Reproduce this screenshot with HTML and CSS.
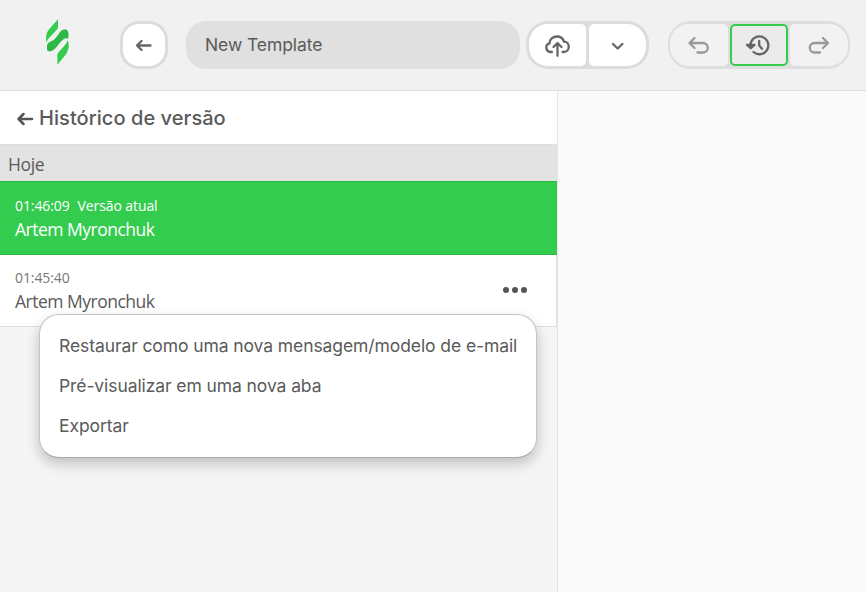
FILE: index.html
```html
<!DOCTYPE html>
<html lang="pt">
<head>
<meta charset="utf-8">
<title>Histórico de versão</title>
<link rel="stylesheet" href="styles.css">
</head>
<body>
<header class="toolbar">
  <svg class="logo" viewBox="42 24 81 144" aria-hidden="true">
    <path fill="#34cc4f" d="M84 28L60 55C49 67 46 78 50 98C54 80 77 68 84 53Z"/>
    <path fill="#30b847" d="M51 114C49 92 66 98 77 84C87 72 92 58 106 58C117 60 117 74 114 86C104 80 94 92 86 103C77 116 66 126 56 124C51 123 51 118 51 114Z"/>
    <path fill="#34cc4f" d="M82 164L82 136C83 122 108 110 113 90C120 108 115 122 107 134Z"/>
  </svg>
  <button class="back" aria-label="Voltar">
    <svg width="24" height="24" viewBox="0 0 24 24"><path d="M18.500 12.500H5M9.500 8l-4.500 4.500 4.500 4.500"/></svg>
  </button>
  <div class="name">New Template</div>
  <div class="group save">
    <button><svg width="28" height="26" viewBox="0 0 28 26"><path d="M8 20H6.300a4.400 4.400 0 0 1-.8-8.600C5.500 7.400 9 4.500 13 4.500c3.500 0 6 2 7 5.100 3 .1 4.800 2.400 4.800 5.200 0 3-2.200 5.200-5 5.200H18.500M13.500 23.800V11.500M9.500 15l4-4 4 4"/></svg></button>
    <button><svg width="24" height="24" viewBox="0 0 24 24"><path d="M7 11l4.700 4.500 4.700-4.500"/></svg></button>
  </div>
  <div class="group history">
    <button class="muted"><svg width="24" height="24" viewBox="0 0 24 24"><path d="M7.500 5L2.500 10l5 5M3 10H16a4.500 4.500 0 0 1 0 9.500H10.500"/></svg></button>
    <button class="active"><svg width="28" height="26" viewBox="0 0 28 26"><path d="M5.500 13.500A8.900 8.900 0 1 1 8.500 20M14.200 9v4.500l2.800 3.200"/><path class="head" d="M2 12.800h7.500l-3.700 3.400z"/></svg></button>
    <button class="muted"><svg width="24" height="24" viewBox="0 0 24 24"><path d="M16 5l5 5-5 5M20.500 10H7.500a4.500 4.500 0 0 0 0 9.500H13"/></svg></button>
  </div>
</header>
<main class="workspace">
  <aside class="panel">
    <h1 class="title">
      <svg width="18" height="16" viewBox="0 0 18 16"><path d="M16 8H3M7.500 3L2.500 8 7.500 13"/></svg>
      <span>Histórico de versão</span>
    </h1>
    <div class="day">Hoje</div>
    <div class="version current">
      <div class="time"><span>01:46:09</span><span class="tag">Versão atual</span></div>
      <div class="author"><span>Artem Myronchuk</span></div>
    </div>
    <div class="version">
      <div class="time"><span>01:45:40</span></div>
      <div class="author"><span>Artem Myronchuk</span></div>
      <div class="dots"><i></i><i></i><i></i></div>
      <div class="menu">
        <div class="item">Restaurar como uma nova mensagem/modelo de e-mail</div>
        <div class="item">Pré-visualizar em uma nova aba</div>
        <div class="item">Exportar</div>
      </div>
    </div>
  </aside>
</main>
</body>
</html>
```

FILE: styles.css
```css
* { box-sizing: border-box; }
body {
  margin: 0;
  height: 592px;
  overflow: hidden;
  display: flex;
  flex-direction: column;
  background: #fafafa;
  color: #5a5a5a;
  font-family: Inter, "Liberation Sans", sans-serif;
}
svg { display: block; flex: none; }
button svg, .title svg {
  fill: none;
  stroke: #666;
  stroke-width: 2.3;
  stroke-linecap: round;
  stroke-linejoin: round;
}
.toolbar {
  height: 91px;
  flex: none;
  display: flex;
  align-items: flex-start;
  padding: 21px 0 0 44px;
  background: #f1f1f1;
  border-bottom: 1px solid #dedede;
}
.logo { width: 27px; height: 48px; margin: -3px 49px 0 0; }
button {
  display: flex;
  align-items: center;
  justify-content: center;
  padding: 0;
  border: 0;
  background: #fff;
}
.back {
  width: 48px;
  height: 48px;
  border: 3px solid #dcdcdc;
  border-radius: 19px;
}
.name {
  width: 334px;
  height: 48px;
  margin-left: 18px;
  padding-left: 19px;
  border-radius: 20px;
  background: #e0e0e0;
  font-size: 17.5px;
  letter-spacing: -.08px;
  line-height: 48px;
}
.group {
  height: 48px;
  display: flex;
  gap: 2px;
  padding: 3px;
  border-radius: 22px;
  background: #dcdcdc;
}
.group button { flex: 1; border-radius: 5px; }
.group button:first-child { border-radius: 19px 5px 5px 19px; }
.group button:last-child { border-radius: 5px 19px 19px 5px; }
.save { width: 123px; margin-left: 6px; gap: 3px; }
.history { width: 182px; margin-left: 19px; padding: 3px 2px; background: #dedede; }
.history button { flex: none; width: 58px; background: #f2f2f2; }
.history .muted svg { stroke: #999; }
.history .active { border: 2px solid #34cc4f; background: #ebebeb; }
.head { fill: #666; }
.workspace { flex: 1; display: flex; }
.panel {
  width: 558px;
  background: #f5f5f5;
  border-right: 1px solid #e5e5e5;
}
.title {
  height: 54px;
  margin: 0;
  padding-left: 16px;
  display: flex;
  align-items: center;
  gap: 5px;
  background: #fff;
  border-bottom: 1px solid #dedede;
  font-size: 20px;
  font-weight: 500;
  letter-spacing: .06px;
}
.title svg { margin-top: 3px; stroke: #555; stroke-width: 2.5; }
.day {
  height: 36px;
  padding-left: 8px;
  background: #e3e3e3;
  font: 400 17.5px/39px "Open Sans", sans-serif;
  letter-spacing: -.4px;
}
.version {
  position: relative;
  height: 72px;
  padding: 12px 0 0 15px;
  background: #fff;
  border-right: 1px solid #dedede;
  border-bottom: 1px solid #dedede;
  font-family: "Open Sans", sans-serif;
}
.time { height: 22px; display: flex; gap: 8px; font-size: 14px; line-height: 22px; color: #777; letter-spacing: -.1px; }
.author { height: 24px; font-size: 17.5px; line-height: 24px; letter-spacing: -.5px; }
.version.current {
  height: 74px;
  padding-top: 13px;
  background: #34cc4e;
  border: 0;
  border-top: 1px solid #2db944;
  border-bottom: 1px solid #2db944;
  color: #fff;
}
.current .time { color: #fff; }
.dots { position: absolute; top: 32px; right: 29px; display: flex; gap: 3px; }
.dots i { width: 6px; height: 6px; border-radius: 50%; background: #555; }
.menu {
  position: absolute;
  top: 59px;
  left: 39px;
  width: 498px;
  height: 144px;
  padding: 12px 19px;
  background: #fff;
  border: 1px solid #c4c4c4;
  border-bottom-color: #aaa;
  border-radius: 20px;
  box-shadow: 0 6px 14px rgba(0, 0, 0, .22);
  font-family: Inter, sans-serif;
}
.item { height: 40px; font-size: 17.5px; line-height: 38px; letter-spacing: -.09px; white-space: nowrap; }
```
